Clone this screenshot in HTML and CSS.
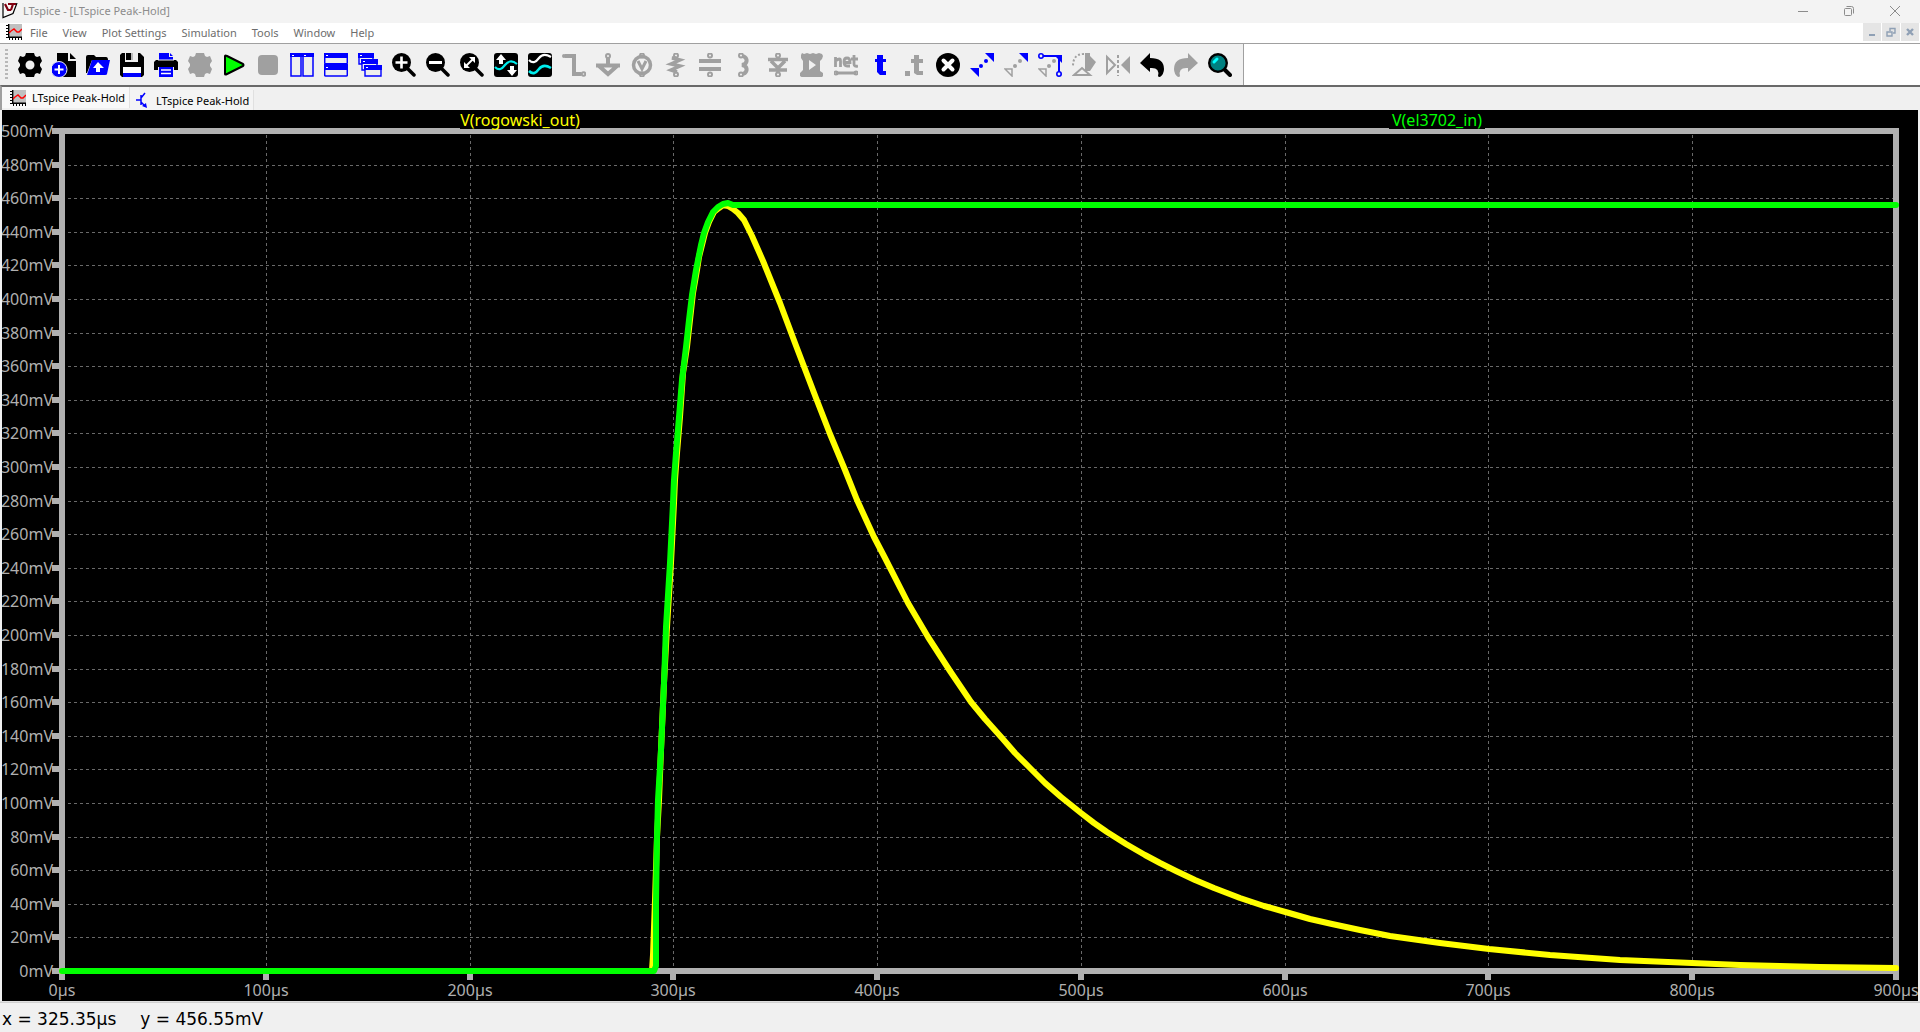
FILE: index.html
```html
<!DOCTYPE html>
<html lang="en">
<head>
<meta charset="utf-8">
<title>LTspice - [LTspice Peak-Hold]</title>
<link rel="stylesheet" href="styles.css">
</head>
<body>
<svg class="defs" aria-hidden="true">
  <symbol id="plot" viewBox="0 0 16 16"><path fill="#c0c0c0" d="M3 0h13v13H3z"/><path stroke="#000" stroke-width="1.4" fill="none" d="M2.7 0v14M2 13.3h14"/><path stroke="#000" stroke-width="2" stroke-dasharray="1 2" fill="none" d="M1 1v13M3 15h13"/><path stroke="#f00" stroke-width="1.4" fill="none" d="M3 9l2-2 3-2 3 3h2l3-3"/></symbol>
</svg>
<div class="app">
  <header class="titlebar">
    <svg class="logo" viewBox="0 0 16 16"><path d="M1 0v14.5l10-4L15 0" fill="#f8f8f8" stroke="#000" stroke-width="1.2"/><path d="M3 1l3 6h3M6 1h8M11 1L9 7" fill="none" stroke="#800010" stroke-width="2.2"/></svg>
    <h1 class="title">LTspice - [LTspice Peak-Hold]</h1>
    <div class="window-controls">
      <button class="wc" aria-label="Minimize"><svg viewBox="0 0 12 12"><path d="M1 6.5h10"/></svg></button>
      <button class="wc" aria-label="Restore"><svg viewBox="0 0 12 12"><rect x="1.5" y="3.5" width="7" height="7" rx="1"/><path d="M3.500 1.500h5q2 0 2 2v5"/></svg></button>
      <button class="wc" aria-label="Close"><svg viewBox="0 0 12 12"><path d="M1 1l10 10M11 1L1 11"/></svg></button>
    </div>
  </header>
  <nav class="menubar">
    <svg class="doc-icon"><use href="#plot"/></svg>
    <button>File</button><button>View</button><button>Plot Settings</button><button>Simulation</button><button>Tools</button><button>Window</button><button>Help</button>
    <div class="mdi">
      <button aria-label="Minimize document"><svg viewBox="0 0 10 10"><path d="M2 8h6" stroke-width="2"/></svg></button>
      <button aria-label="Restore document"><svg viewBox="0 0 10 10"><path d="M1 5h5v4H1zM1 5h5M4 4V1.500h5V6H7" stroke-width="1.4"/></svg></button>
      <button aria-label="Close document"><svg viewBox="0 0 10 10"><path d="M2 2l6 6M8 2L2 8" stroke-width="2.4"/></svg></button>
    </div>
  </nav>
  <div class="toolrow">
    <div class="toolbar" role="toolbar">
      <span class="grip"></span>
      <button aria-label="Settings"><svg viewBox="0 0 24 24"><path fill="#000" fill-rule="evenodd" d="M8 0h8l1 3 2 1 3-1 2 5-2 3v2l2 3-2 5-3-1-2 1-1 3H8l-1-3-2-1-3 1-2-5 2-3v-2L0 8l2-5 3 1 2-1zM12 7.500a4.500 4.500 0 1 0 0 9 4.500 4.500 0 1 0 0-9"/></svg></button>
      <button aria-label="New"><svg viewBox="0 0 24 24"><path d="M5 0h11v8h8v16H5z"/><path d="M18 0l6 6h-6z"/><circle cx="7" cy="16.500" r="8" fill="#00f" stroke="#efefef"/><path d="M7 12v9M2.500 16.500h9" stroke="#fff" stroke-width="2"/></svg></button>
      <button aria-label="Open"><svg viewBox="0 0 24 24"><path d="M0 20V4q0-2 2-2h6l2 2h10q2 0 2 3H6L1 20z"/><path fill="#00f" d="M6 7h18l-3 14q0 1-2 1H1z"/><path fill="#fff" d="M12 9l6 6h-4v4h-4v-4H7z"/></svg></button>
      <button aria-label="Save"><svg viewBox="0 0 24 24"><path d="M2 0h18l4 4v18l-2 2H2l-2-2V2z"/><path fill="#efefef" d="M5 0h13v9H5z"/><path d="M6 0h5v7H6z"/><path fill="#bbb" d="M11 0h2v7h-2z"/><path fill="#fff" d="M3 14h18v6H3z"/><path fill="#00f" d="M3 20h18v4H3z"/></svg></button>
      <button aria-label="Print"><svg viewBox="0 0 24 24"><path fill="#00f" d="M5 0h10v4h4v4H5zM16 0l3 3h-3z"/><path d="M2 7h20l2 2v8h-4v-3H4v3H0V9z"/><path fill="#00f" d="M5 14h14v10H5z"/><path stroke="#fff" stroke-width="1.400" d="M7 17h10M7 20.500h10"/><path stroke="#efefef" d="M4 7h16"/></svg></button>
      <button aria-label="Halt" disabled><svg viewBox="0 0 24 24"><path fill="#a0a0a0" d="M8 0h8l1 3 2 1 3-1 2 5-2 3v2l2 3-2 5-3-1-2 1-1 3H8l-1-3-2-1-3 1-2-5 2-3v-2L0 8l2-5 3 1 2-1z"/></svg></button>
      <button aria-label="Run"><svg viewBox="0 0 24 24"><path fill="#0f0" stroke="#000" stroke-width="2" stroke-linejoin="round" d="M3 3v18q0 1 2 0l16-8q1-1 0-2L5 3Q3 2 3 3z"/></svg></button>
      <button aria-label="Stop" disabled><svg viewBox="0 0 24 24"><rect x="2" y="2" width="20" height="20" rx="4" fill="#a0a0a0"/></svg></button>
      <button aria-label="Tile vertically"><svg viewBox="0 0 24 24"><path fill="#eee" stroke="#00f" stroke-width="1.500" d="M1 1h10v22H1zM13 1h10v22H13z"/><path fill="#00f" d="M0 0h24v4H0z"/><path fill="#fff" d="M2 2h2v1H2zM14 2h2v1h-2z"/></svg></button>
      <button aria-label="Tile horizontally"><svg viewBox="0 0 24 24"><rect x=".7" y=".7" width="22.600" height="10" rx="1" fill="#eee" stroke="#00f" stroke-width="1.500"/><rect x=".7" y="12" width="22.600" height="11" rx="1" fill="#eee" stroke="#00f" stroke-width="1.500"/><path fill="#00f" d="M0 0h24v5H0zM0 11h24v6H0z"/><path fill="#fff" d="M2 2h2v1H2zM2 14h2v1H2z"/></svg></button>
      <button aria-label="Cascade"><svg viewBox="0 0 24 24"><path fill="#eee" stroke="#00f" stroke-width="1.400" d="M1 1h14v10H1z"/><path fill="#00f" d="M0 0h16v5H0z"/><path fill="#eee" stroke="#00f" stroke-width="1.400" d="M4 7h15v10H4z"/><path fill="#00f" d="M3 6h17v5H3z"/><path fill="#eee" stroke="#00f" stroke-width="1.400" d="M7 13h16v10H7z"/><path fill="#00f" d="M6 12h18v5H6z"/><path fill="#fff" d="M2 2h2v1H2zM5 8h2v1H5zM8 14h2v1H8z"/></svg></button>
      <button aria-label="Zoom in"><svg viewBox="0 0 24 24"><circle cx="9.500" cy="9.500" r="9.500"/><path stroke="#000" stroke-width="3.500" stroke-linecap="round" d="M14 14l8 8"/><path stroke="#fff" stroke-width="2.600" d="M9.500 3.500v12M3.500 9.500h12"/></svg></button>
      <button aria-label="Zoom out"><svg viewBox="0 0 24 24"><circle cx="9.500" cy="9.500" r="9.500"/><path stroke="#000" stroke-width="3.500" stroke-linecap="round" d="M14 14l8 8"/><path stroke="#fff" stroke-width="3" d="M3 9.500h13"/></svg></button>
      <button aria-label="Zoom to fit"><svg viewBox="0 0 24 24"><circle cx="9.500" cy="9.500" r="9.500"/><path stroke="#000" stroke-width="3.500" stroke-linecap="round" d="M14 14l8 8"/><path stroke="#fff" stroke-width="2" d="M6 13l7-7"/><path fill="#fff" d="M15 4v6L9 4zM4 9v6h6z"/></svg></button>
      <button aria-label="Autorange"><svg viewBox="0 0 24 24"><rect width="24" height="24" rx="3"/><path fill="none" stroke="#0ee" stroke-width="2.200" d="M1 14c4 4 7 2 10-2s7-5 12-1"/><path fill="#fff" d="M7 1l5 6H9v4H5V7H2zM18 23l-5-6h3v-4h4v4h3z"/></svg></button>
      <button aria-label="Pan"><svg viewBox="0 0 24 24"><rect width="24" height="24" rx="3"/><path fill="none" stroke="#fff" stroke-width="2.200" d="M1 7c4 4 7 2 10-2s7-4 12-1"/><path fill="none" stroke="#0ee" stroke-width="2.600" d="M1 18c4 4 7 2 10-2s7-4 12-1"/></svg></button>
      <button class="dim" aria-label="Wire" disabled><svg viewBox="0 0 24 24"><path stroke-width="4" d="M3 3h9v18h7"/><circle cx="21.500" cy="21" r="1.800"/><circle cx="2" cy="3" r="1"/></svg></button>
      <button class="dim" aria-label="Ground" disabled><svg viewBox="0 0 24 24"><circle cx="12" cy="3" r="2"/><path stroke-width="4" d="M12 5v7M0 12.500h24M3 13l9 8 9-8"/></svg></button>
      <button class="dim" aria-label="Voltage source" disabled><svg viewBox="0 0 24 24"><circle cx="12" cy="12" r="8.500" stroke-width="3.500"/><circle cx="12" cy="2.500" r="2"/><circle cx="12" cy="21.500" r="2"/><path stroke-width="3" d="M8 8l4 8 4-8"/></svg></button>
      <button class="dim" aria-label="Resistor" disabled><svg viewBox="0 0 24 24"><circle cx="12" cy="2.500" r="2"/><circle cx="12" cy="21.500" r="2"/><path stroke-width="3.500" d="M12 5H8l8 2-9 4 9 2-9 4 6 2"/></svg></button>
      <button class="dim" aria-label="Capacitor" disabled><svg viewBox="0 0 24 24"><circle cx="12" cy="2.500" r="2"/><circle cx="12" cy="21.500" r="2"/><path stroke-width="4" d="M1 8h22M1 16h22"/></svg></button>
      <button class="dim" aria-label="Inductor" disabled><svg viewBox="0 0 24 24"><circle cx="9" cy="2.500" r="2"/><circle cx="9" cy="21.500" r="2"/><path stroke-width="4" d="M11 3c5 2 5 8-1 9 6 1 6 7 1 9"/></svg></button>
      <button class="dim" aria-label="Diode" disabled><svg viewBox="0 0 24 24"><circle cx="12" cy="2.500" r="2"/><circle cx="12" cy="21.500" r="2"/><path stroke-width="3.500" d="M2 6.500h20M5 8l7 7 7-7M3 17h18M12 17v3"/></svg></button>
      <button class="dim" aria-label="Component" disabled><svg viewBox="0 0 24 24"><path fill="#a0a0a0" stroke="none" fill-rule="evenodd" d="M2 0l2 1 3-1 3 1 3-1 3 1 3-1 3 1 1 2-1 3-2 2v10l3 2v3l-2 2-3-1-3 1-3-1-3 1-3-1-3 1-3-2v-3l3-3V8L1 5V2zM9 7v10l7-5z"/></svg></button>
      <button class="dim" aria-label="Net label" disabled><svg viewBox="0 0 24 24"><path stroke-width="2.800" d="M1.500 4v10M1.500 8q5-4 5 0v6M10 9.500h6Q16 5 13 5t-3 4q0 4 3 4h3M20 2v9q0 3 4 2M17 6h7M2 20h20"/><circle cx="2" cy="20" r="1.500"/><circle cx="22" cy="20" r="1.500"/></svg></button>
      <button aria-label="Text"><svg viewBox="0 0 24 24"><path fill="#00f" d="M9 2h6v4h3v3h-3v9h3v4h-6l-3-3V9H7V6h2z"/></svg></button>
      <button class="dim" aria-label="SPICE directive" disabled><svg viewBox="0 0 24 24"><path fill="#a0a0a0" stroke="none" d="M12 2h5v4h4v4h-4v8h4v4h-6l-3-2V10H9V6h3zM3 18h5v5H3z"/></svg></button>
      <button aria-label="Delete"><svg viewBox="0 0 24 24"><circle cx="12" cy="12" r="12"/><path stroke="#fff" stroke-width="4" stroke-linecap="round" d="M7.500 7.500l9 9M16.500 7.500l-9 9"/></svg></button>
      <button aria-label="Move"><svg viewBox="0 0 24 24"><path fill="#00f" d="M15 0h9v9zM0 15h9v9z"/><circle cx="16" cy="8" r="2" fill="#00f"/><circle cx="11" cy="13" r="2" fill="#00f"/></svg></button>
      <button aria-label="Copy"><svg viewBox="0 0 24 24"><path fill="#00f" d="M15 0h9v9z"/><path fill="none" stroke="#a0a0a0" stroke-width="1.500" d="M1 16h7v7z"/><circle cx="16" cy="8" r="2" fill="#a0a0a0"/><circle cx="11" cy="13" r="2" fill="#a0a0a0"/></svg></button>
      <button aria-label="Stretch"><svg viewBox="0 0 24 24"><path fill="#00f" d="M16 2h8v8z"/><path fill="none" stroke="#00f" stroke-width="2" d="M5 3h16v16"/><g fill="none" stroke="#00f" stroke-width="1.600"><circle cx="3" cy="3" r="2.200"/><circle cx="21" cy="21" r="2.200"/></g><path fill="none" stroke="#a0a0a0" stroke-width="1.500" d="M1 16h7v7z"/><circle cx="16" cy="8" r="2" fill="#a0a0a0"/><circle cx="11" cy="13" r="2" fill="#a0a0a0"/></svg></button>
      <button class="dim" aria-label="Rotate" disabled><svg viewBox="0 0 24 24"><path fill="#a0a0a0" stroke="none" d="M13 0h5v3l6 6-6 9h-5z"/><path stroke-width="2" stroke-dasharray="2 2" d="M12 1Q1 1 1 13"/><path stroke-width="2" d="M2 22l8-7 8 7z"/></svg></button>
      <button class="dim" aria-label="Mirror" disabled><svg viewBox="0 0 24 24"><path stroke-width="2" d="M1 4v16l8-8z"/><path fill="#a0a0a0" stroke="none" d="M24 3v18l-9-9z"/><path stroke-width="2" stroke-dasharray="3 2" d="M12 2v21"/></svg></button>
      <button aria-label="Undo"><svg viewBox="0 0 24 24"><path d="M10 0v5q14 0 14 11 0 5-4 8-2 0-2-1 2-9-8-8v4L0 10z"/></svg></button>
      <button class="dim" aria-label="Redo" disabled><svg viewBox="0 0 24 24"><path fill="#a0a0a0" stroke="none" d="M14 0v5Q0 5 0 16q0 5 4 8 2 0 2-1-2-9 8-8v4l10-9z"/></svg></button>
      <button aria-label="Find"><svg viewBox="0 0 24 24"><path stroke="#000" stroke-width="4" stroke-linecap="round" d="M16 16l6 6"/><circle cx="10" cy="10" r="8.800" fill="#008080" stroke="#000" stroke-width="2.400"/><path stroke="#0ff" stroke-width="3" stroke-linecap="round" d="M6 9l3-3"/></svg></button>
    </div>
  </div>
  <div class="tabs" role="tablist">
    <button class="tab active" role="tab"><svg><use href="#plot"/></svg>LTspice Peak-Hold</button>
    <button class="tab" role="tab"><svg viewBox="0 0 16 16"><path d="M2 8h5M7 3v10M7 6l4-5M7 10l4 4" stroke="#00f" stroke-width="1.500" fill="none"/><path fill="#00f" d="M8 14l4-3 1 5z"/></svg>LTspice Peak-Hold</button>
  </div>
  <main class="plot">
    <svg class="chart" viewBox="2 110 1916 891" role="img" aria-label="Transient voltage plot">
      <path class="grid" d="M68 165H1893M68 198H1893M68 232H1893M68 265H1893M68 299H1893M68 333H1893M68 366H1893M68 400H1893M68 433H1893M68 467H1893M68 501H1893M68 534H1893M68 568H1893M68 601H1893M68 635H1893M68 669H1893M68 702H1893M68 736H1893M68 769H1893M68 803H1893M68 837H1893M68 870H1893M68 904H1893M68 937H1893"/>
      <path class="grid" d="M266 135V968M470 135V968M673 135V968M877 135V968M1081 135V968M1285 135V968M1488 135V968M1692 135V968"/>
      <path class="axis" d="M62 131H1896V971H62zM52 131h8M52 165h8M52 198h8M52 232h8M52 265h8M52 299h8M52 333h8M52 366h8M52 400h8M52 433h8M52 467h8M52 501h8M52 534h8M52 568h8M52 601h8M52 635h8M52 669h8M52 702h8M52 736h8M52 769h8M52 803h8M52 837h8M52 870h8M52 904h8M52 937h8M52 971h8"/>
      <path class="axis" d="M62 971v9M266 971v9M470 971v9M673 971v9M877 971v9M1081 971v9M1285 971v9M1488 971v9M1692 971v9M1896 971v9"/>
      <g class="ylabels">
        <text x="53" y="137">500mV</text><text x="53" y="171">480mV</text><text x="53" y="204">460mV</text><text x="53" y="238">440mV</text><text x="53" y="271">420mV</text><text x="53" y="305">400mV</text><text x="53" y="339">380mV</text><text x="53" y="372">360mV</text><text x="53" y="406">340mV</text><text x="53" y="439">320mV</text><text x="53" y="473">300mV</text><text x="53" y="507">280mV</text><text x="53" y="540">260mV</text><text x="53" y="574">240mV</text><text x="53" y="607">220mV</text><text x="53" y="641">200mV</text><text x="53" y="675">180mV</text><text x="53" y="708">160mV</text><text x="53" y="742">140mV</text><text x="53" y="775">120mV</text><text x="53" y="809">100mV</text><text x="53" y="843">80mV</text><text x="53" y="876">60mV</text><text x="53" y="910">40mV</text><text x="53" y="943">20mV</text><text x="53" y="977">0mV</text>
      </g>
      <g class="xlabels">
        <text x="62" y="996">0µs</text><text x="266" y="996">100µs</text><text x="470" y="996">200µs</text><text x="673" y="996">300µs</text><text x="877" y="996">400µs</text><text x="1081" y="996">500µs</text><text x="1285" y="996">600µs</text><text x="1488" y="996">700µs</text><text x="1692" y="996">800µs</text><text x="1896" y="996">900µs</text>
      </g>
      <path d="M460 110h120v19H460zM1389 110h96v19h-96z"/>
      <text class="trace-name yellow" x="520" y="126">V(rogowski_out)</text>
      <text class="trace-name green" x="1437" y="126">V(el3702_in)</text>
      <polyline class="trace yellow-line" points="62,971 652,971 653,955 655,900 657,837 659,800 661,750 664,683 667,627 671,563 674,503 675,480 677,453 680,417 683,373 687,347 690,320 693,293 697,270 699,257 702,245 705,233 709,222 714,212 719,208 723,205 728,206 733,209 738,213 744,220 752,236 763,261 780,303 795,343 816,398 830,434 845,470 857,500 874,537 885,558 908,603 928,637 950,671 971,702 985,719 1002,738 1015,753 1030,768 1045,783 1061,797 1081,813 1094,823 1107,832 1126,844 1145,855 1160,863 1176,871 1195,880 1214,888 1240,898 1264,906 1289,913 1310,919 1332,924 1360,930 1390,936 1440,943 1489,949 1550,955 1620,960 1692,963 1740,965 1780,966 1820,967 1896,968"/>
      <polyline class="trace green-line" points="62,971 654,971 656,966 656,903 657,837 658,800 661,750 664,683 666,627 670,563 673,503 674,480 676,453 679,417 682,380 686,347 689,320 692,295 696,270 699,255 701,245 704,233 708,222 713,212 718,207 723,204 728,203 733,205 1896,205"/>
    </svg>
  </main>
  <footer class="status"><span>x = 325.35µs</span><span>y = 456.55mV</span></footer>
</div>
</body>
</html>
```
FILE: styles.css
```css
* { box-sizing: border-box; }
body {
  margin: 0;
  background: #f0f0f0;
  font-family: "Noto Sans", "Open Sans", sans-serif;
  font-size: 11px;
}
button {
  margin: 0;
  padding: 0;
  border: 0;
  background: none;
  font: inherit;
  color: inherit;
}
svg { display: block; flex: none; }
.defs { position: absolute; width: 0; height: 0; }
.app { display: flex; flex-direction: column; min-height: 100vh; }

.titlebar {
  display: flex;
  align-items: center;
  height: 23px;
  padding: 0 2px 2px;
  background: #f3f3f3;
  color: #8c8c8c;
}
.logo { width: 16px; height: 16px; }
.title { margin: 0 0 0 5px; font-size: 11px; font-weight: 400; }
.window-controls { display: flex; margin-left: auto; }
.wc { display: flex; justify-content: center; align-items: center; width: 46px; height: 20px; }
.wc svg { width: 12px; height: 12px; fill: none; stroke: #8c8c8c; }

.menubar {
  display: flex;
  align-items: center;
  gap: 1px;
  height: 21px;
  padding: 0 0 2px 6px;
  background: #fff;
  border-bottom: 1px solid #a0a0a0;
  color: #6d6d6d;
}
.doc-icon { width: 16px; height: 16px; }
.menubar > button { padding: 0 7px; }
.mdi { display: flex; gap: 1px; margin: 0 1px 0 auto; }
.mdi button {
  display: flex;
  justify-content: center;
  align-items: center;
  width: 18px;
  height: 18px;
  background: #e5e5e5;
}
.mdi svg { width: 10px; height: 10px; fill: none; stroke: #8fa0b5; }

.toolrow { display: flex; height: 41px; background: #fff; }
.toolbar {
  display: flex;
  align-items: center;
  padding-right: 6px;
  background: #f0f0f0;
  border-right: 1px solid #a0a0a0;
}
.grip {
  width: 3px;
  height: 32px;
  margin: 0 5px;
  background: repeating-linear-gradient(#b8b8b8 0 2px, transparent 2px 4px);
}
.toolbar button { display: flex; justify-content: center; width: 34px; }
.toolbar svg { width: 24px; height: 24px; }
.dim svg { fill: none; stroke: #a0a0a0; stroke-width: 2; }

.tabs {
  display: flex;
  align-items: flex-start;
  height: 25px;
  border-top: 2px solid #696969;
  border-left: 2px solid #a0a0a0;
}
.tab {
  display: flex;
  align-items: center;
  gap: 6px;
  height: 20px;
  margin-top: 3px;
  padding: 0 4px;
  border-right: 1px solid #e0e0e0;
  background: #f4f4f4;
  color: #000;
}
.tab.active { height: 21px; margin-top: 0; padding: 0 4px 0 8px; background: #f9f9f9; }
.tab svg { width: 16px; height: 16px; }

.plot {
  flex: 1;
  padding: 0 2px;
  background: #000;
  border: 0 solid #a0a0a0;
  border-bottom: 1px solid #e0e0e0;
  background-clip: content-box;
}
.chart { width: 100%; height: auto; background: #000; }
.grid { fill: none; stroke: #696969; stroke-width: 1; stroke-dasharray: 3 3; shape-rendering: crispEdges; }
.axis { fill: none; stroke: #b0b0b0; stroke-width: 6; }
.ylabels, .xlabels { fill: #b0b0b0; font-size: 16px; }
.ylabels { text-anchor: end; }
.xlabels, .trace-name { text-anchor: middle; }
.trace-name { font-size: 16px; }
.yellow { fill: #ff0; }
.green { fill: #0f0; }
.trace { fill: none; stroke-width: 6; stroke-linejoin: round; stroke-linecap: round; }
.yellow-line { stroke: #ff0; }
.green-line { stroke: #0f0; }

.status {
  display: flex;
  align-items: center;
  gap: 24px;
  height: 30px;
  padding: 2px 2px 0;
  border-top: 1px solid #d0d0d0;
  color: #000;
  font-family: "DejaVu Sans", sans-serif;
  font-size: 17px;
}
```
